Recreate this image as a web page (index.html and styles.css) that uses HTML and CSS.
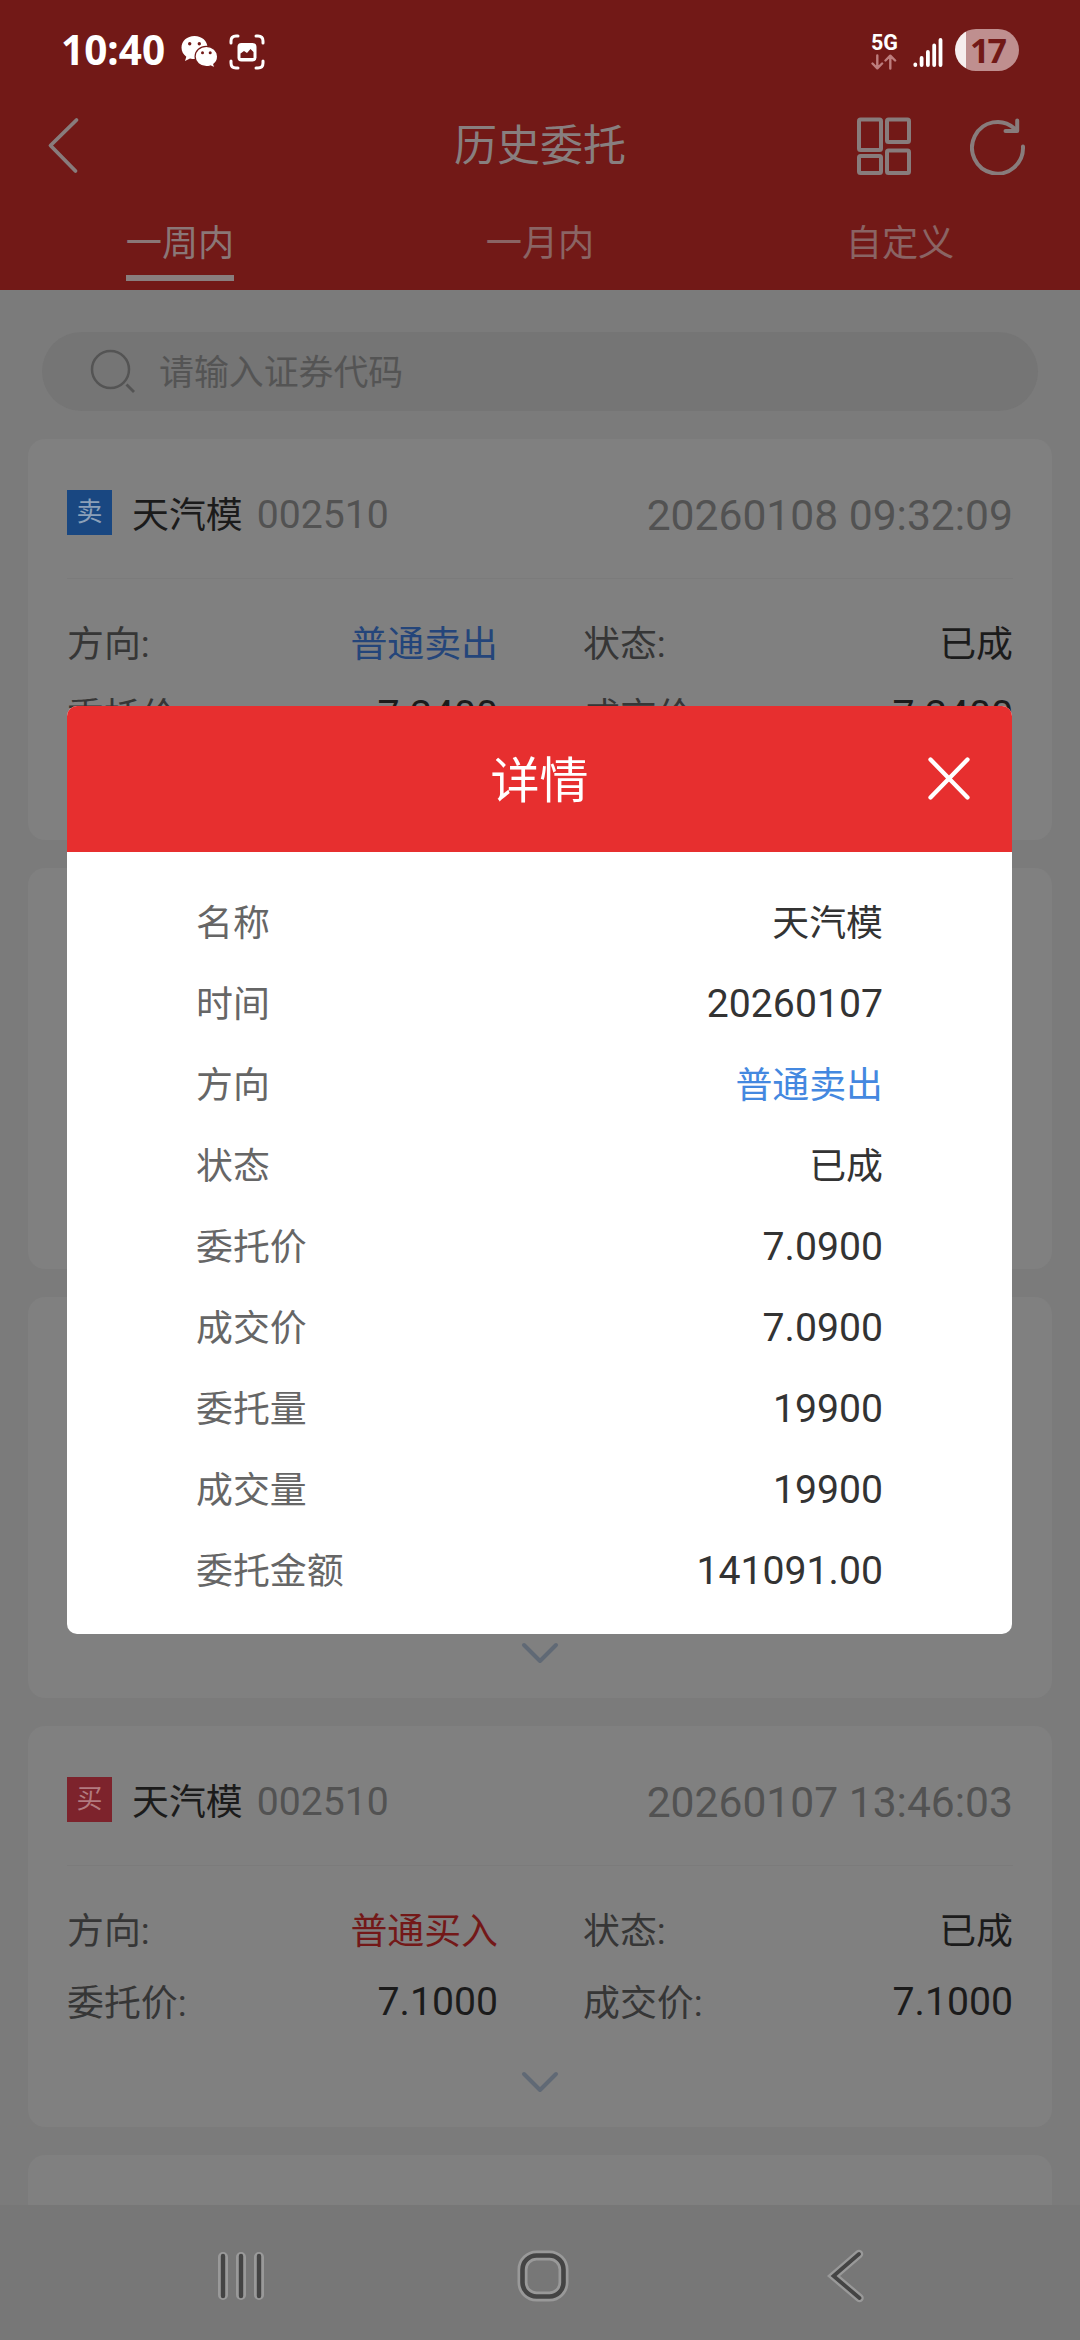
FILE: index.html
```html
<!DOCTYPE html>
<html lang="zh-CN">
<head>
<meta charset="utf-8">
<title>历史委托</title>
<link rel="stylesheet" href="styles.css">
</head>
<body>
<div class="screen">
  <header class="top">
    <div class="status">
      <div class="status-left">
        <span class="clock">10:40</span>
        <svg class="wechat" width="37" height="33" viewBox="0 0 37 33">
          <path fill="#fff" d="M13.500 1C6 1 .5 6 .5 12.500c0 3.700 1.800 7 4.800 9.200L4 26l5-2.600c1.500.4 3 .6 4.500.6 7.500 0 13-5 13-11.500S21 1 13.500 1z"/>
          <path fill="#fff" stroke="#721917" stroke-width="1.200" d="M25.300 11.300c-6.200 0-11.200 4.500-11.200 10.200s5 10.200 11.200 10.200c1.500 0 2.900-.3 4.200-.7l4.300 2-1-3.700c2.400-1.800 3.800-4.600 3.800-7.800 0-5.700-5.100-10.200-11.300-10.200z"/>
          <g fill="#721917"><circle cx="8.700" cy="8.800" r="1.700"/><circle cx="18.300" cy="8.800" r="1.700"/><circle cx="21.500" cy="17.700" r="1.500"/><circle cx="29.200" cy="17.700" r="1.500"/></g>
        </svg>
        <svg class="capture" width="36" height="36" viewBox="0 0 36 36">
          <path fill="none" stroke="#fff" stroke-width="3" stroke-linecap="round" d="M2 9V7q0-5 5-5h2M27 2h2q5 0 5 5v2M34 27v2q0 5-5 5h-2M9 34H7q-5 0-5-5v-2"/>
          <rect x="8.500" y="9" width="19" height="18.500" rx="4" fill="#fff"/>
          <path fill="#721917" d="M11.500 24v-4.500l3.500-2.500 3 2 3.500-4 3 3V24z"/>
        </svg>
      </div>
      <div class="status-right">
        <div class="net">
          <span class="net-label">5G</span>
          <svg width="26" height="16" viewBox="0 0 26 16"><path fill="none" stroke="#bd7d7d" stroke-width="2.400" stroke-linecap="round" stroke-linejoin="round" d="M6.300 1.500V14M1.500 9.500l4.800 4.800 4.800-4.800M19.300 14.500V2M14.500 6.500l4.800-4.800 4.800 4.800"/></svg>
        </div>
        <svg class="signal" width="30" height="30" viewBox="0 0 30 30"><path stroke="#fff" stroke-width="3.800" stroke-linecap="round" d="M2.300 27v-.5M8.600 27v-7M14.900 27V14M21.200 27V7.500M27.500 27V2"/></svg>
        <div class="battery">17</div>
      </div>
    </div>
    <nav class="nav">
      <svg class="back" width="34" height="60" viewBox="0 0 34 60"><path fill="none" stroke="#887c7c" stroke-width="3.800" stroke-linecap="round" stroke-linejoin="round" d="M30.500 4 4.500 29.500 29.500 55"/></svg>
      <h1 class="title">历史委托</h1>
      <div class="actions">
        <svg width="54" height="58" viewBox="0 0 54 58"><g fill="none" stroke="#887c7c" stroke-width="4"><rect x="2" y="2.500" width="22" height="30.500" rx="1.500"/><rect x="2" y="39" width="22" height="17" rx="1.500"/><rect x="30" y="2.500" width="22" height="22.500" rx="1.500"/><rect x="30" y="33.500" width="22" height="22.500" rx="1.500"/></g></svg>
        <svg width="56" height="58" viewBox="0 0 56 58"><g fill="none" stroke="#887c7c" stroke-width="4" stroke-linecap="round"><path d="M53 29.500A25.500 25.800 0 1 1 44.500 11.500"/><path d="M47.200 3.500V14H35.500" stroke-linejoin="round"/></g></svg>
      </div>
    </nav>
    <div class="tabs">
      <div class="tab active"><span>一周内</span></div>
      <div class="tab"><span>一月内</span></div>
      <div class="tab"><span>自定义</span></div>
    </div>
  </header>
  <main class="body">
    <div class="search">
      <svg width="46" height="46" viewBox="0 0 46 46"><g fill="none" stroke="#545454" stroke-width="2.500"><circle cx="20.500" cy="20.500" r="18.500"/><path stroke-width="2.800" d="M36.500 35.500l7.500 7.500"/></g></svg>
      <span>请输入证券代码</span>
    </div>
    <section class="card">
      <div class="card-head">
        <span class="badge sell">卖</span><span class="name">天汽模</span><span class="code">002510</span><time>20260108 09:32:09</time>
      </div>
      <div class="grid">
        <div class="field"><label>方向:</label><b class="blue">普通卖出</b></div>
        <div class="field"><label>状态:</label><b>已成</b></div>
        <div class="field"><label>委托价:</label><b class="num">7.2400</b></div>
        <div class="field"><label>成交价:</label><b class="num">7.2400</b></div>
      </div>
    </section>
    <section class="card"></section>
    <section class="card">
      <svg class="more" width="38" height="22" viewBox="0 0 38 22"><path fill="none" stroke="#606975" stroke-width="4" stroke-linecap="round" stroke-linejoin="round" d="M3 3l16 16L35 3"/></svg>
    </section>
    <section class="card">
      <div class="card-head">
        <span class="badge buy">买</span><span class="name">天汽模</span><span class="code">002510</span><time>20260107 13:46:03</time>
      </div>
      <div class="grid">
        <div class="field"><label>方向:</label><b class="red">普通买入</b></div>
        <div class="field"><label>状态:</label><b>已成</b></div>
        <div class="field"><label>委托价:</label><b class="num">7.1000</b></div>
        <div class="field"><label>成交价:</label><b class="num">7.1000</b></div>
      </div>
      <svg class="more" width="38" height="22" viewBox="0 0 38 22"><path fill="none" stroke="#606975" stroke-width="4" stroke-linecap="round" stroke-linejoin="round" d="M3 3l16 16L35 3"/></svg>
    </section>
    <section class="card"></section>
  </main>
  <footer class="sysbar">
    <svg width="50" height="54" viewBox="0 0 50 54"><g stroke-linecap="round"><path stroke="#999" stroke-width="10" d="M7 8v38M25 8v38M43 8v38"/><path stroke="#444" stroke-width="4.400" d="M7 7v40M25 7v40M43 7v40"/></g></svg>
    <svg width="54" height="54" viewBox="0 0 54 54"><g fill="none"><rect x="6.500" y="6.500" width="41" height="41" rx="14" stroke="#999" stroke-width="10"/><rect x="6.500" y="6.500" width="41" height="41" rx="14" stroke="#444" stroke-width="4.600"/></g></svg>
    <svg width="38" height="56" viewBox="0 0 38 56"><g fill="none" stroke-linecap="round"><path stroke="#999" stroke-width="8.500" d="M32 6 6.500 28 32.500 50"/><path stroke="#444" stroke-width="3.800" d="M32 6 6.500 28 32.500 50"/></g></svg>
  </footer>
</div>
<div class="modal">
  <div class="modal-head">
    <h2>详情</h2>
    <svg class="close" width="44" height="44" viewBox="0 0 44 44"><path stroke="#fff" stroke-width="4.300" stroke-linecap="round" d="M3.500 3.500l37 38M40.500 3.500l-37 38"/></svg>
  </div>
  <div class="rows">
    <div class="row"><span>名称</span><b>天汽模</b></div>
    <div class="row"><span>时间</span><b class="num">20260107</b></div>
    <div class="row"><span>方向</span><b class="link">普通卖出</b></div>
    <div class="row"><span>状态</span><b>已成</b></div>
    <div class="row"><span>委托价</span><b class="num">7.0900</b></div>
    <div class="row"><span>成交价</span><b class="num">7.0900</b></div>
    <div class="row"><span>委托量</span><b class="num">19900</b></div>
    <div class="row"><span>成交量</span><b class="num">19900</b></div>
    <div class="row"><span>委托金额</span><b class="num">141091.00</b></div>
  </div>
</div>
</body>
</html>
```
FILE: styles.css
```css
* { box-sizing: border-box; margin: 0; padding: 0; }
body { width: 1080px; height: 2340px; overflow: hidden; font-family: Roboto, "Noto Sans CJK SC", sans-serif; font-size: 36.900px; font-weight: 400; }
b, h1, h2 { font-weight: 400; }
svg { display: block; flex: none; }
.screen { display: flex; flex-direction: column; height: 2340px; background: #7b7b7b; }

.top { flex: none; height: 290px; background: #721917; }
.status { display: flex; justify-content: space-between; height: 100px; padding: 0 61px; }
.status-left, .status-right { display: flex; align-items: center; height: 100px; }
.clock { width: 120px; font: 700 40.500px/1 "Noto Sans", sans-serif; color: #fff; }
.wechat { margin-top: 3px; }
.capture { margin: 3px 0 0 11px; }
.net { display: flex; flex-direction: column; gap: 3px; width: 26px; margin: 3px 16px 0 0; }
.net-label { font: 700 21.500px/17px Roboto, sans-serif; color: #fff; }
.signal { margin: 6px 12px 0 0; }
.battery { width: 64px; height: 42px; padding-left: 15px; border-radius: 21px; background: linear-gradient(90deg, #f6eeee 11px, #bf8f8f 11px); font: 700 34px/42px "Noto Sans", sans-serif; letter-spacing: -2px; color: #721917; }

.nav { display: grid; grid-template-columns: 1fr auto 1fr; align-items: center; height: 91px; padding: 0 54px 0 46px; }
.title { padding-left: 8px; font-size: 43px; line-height: 60px; color: #887f7f; }
.actions { display: flex; justify-content: flex-end; gap: 59px; }
.tabs { display: grid; grid-template-columns: repeat(3, 1fr); }
.tab { display: flex; justify-content: center; height: 90px; padding-top: 24px; font-size: 36.200px; color: #8a6464; }
.tab span { height: 66px; line-height: 58px; }
.tab.active { color: #8a7777; }
.tab.active span { border-bottom: 6px solid #897e7e; }

.tab span { height: 66px; }
.body { flex: 1; overflow: hidden; padding: 42px 28px 0; }
.search { display: flex; align-items: center; gap: 23px; height: 79px; margin: 0 14px 28px; padding-left: 48px; border-radius: 40px; background: #757575; color: #545454; font-size: 34.900px; }
.search span { padding-bottom: 3px; }
.card { position: relative; height: 401px; margin-bottom: 28px; padding: 0 39px; border-radius: 17px; background: #808080; }
.card-head { display: flex; align-items: center; height: 140px; padding-top: 12px; border-bottom: 1px solid #7b7b7b; }
.badge { width: 45px; height: 45px; margin: 0 20px 4px 0; font-size: 26px; line-height: 45px; text-align: center; }
.sell { background: #194781; color: #8ca0b8; }
.buy { background: #7d232c; color: #b27b80; }
.name { padding-bottom: 5px; color: #1b1b1b; }
.code { margin-left: 14px; font-size: 39.200px; color: #525252; }
.card-head time { margin-left: auto; font-size: 42.600px; color: #525252; }
.grid { display: grid; grid-template-columns: 431px 430px; column-gap: 85px; grid-auto-rows: 72px; padding-top: 28px; }
.field { display: flex; justify-content: space-between; align-items: center; color: #1b1b1b; }
.field label, .field b { padding-bottom: 5px; }
.field label { color: #363636; }
.field .blue { color: #24457a; }
.field .red { color: #731818; }
.num { font-size: 39.200px; }
.field .num { padding-bottom: 0; }
.more { position: absolute; left: 493px; top: 345px; }

.sysbar { display: flex; flex: none; align-items: center; height: 135px; padding: 6px 0 0 216px; background: #777; }
.sysbar svg:nth-child(2) { margin-left: 250px; }
.sysbar svg:nth-child(3) { margin-left: 257px; }

.modal { position: absolute; left: 67px; top: 706px; width: 945px; height: 928px; overflow: hidden; border-radius: 10px; background: #fff; }
.modal-head { display: grid; grid-template-columns: 1fr auto 1fr; align-items: center; height: 146px; background: #e72f2f; color: #fff; }
.modal-head h2 { grid-column: 2; padding-top: 5px; font-size: 49px; line-height: 70px; }
.close { justify-self: end; margin: 0 41px 2px 0; }
.rows { padding: 30px 129px 0; }
.row { display: flex; justify-content: space-between; align-items: center; height: 81px; color: #333; }
.row span, .row b { padding-bottom: 6px; }
.row span { color: #666; }
.row .num { padding-bottom: 0; }
.row .link { color: #4488e0; }
```
